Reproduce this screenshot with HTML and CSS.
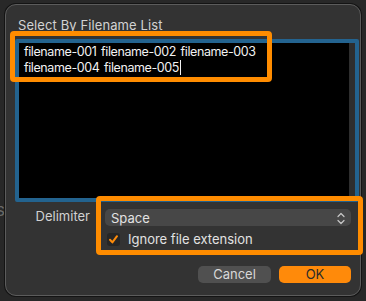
FILE: index.html
```html
<!DOCTYPE html>
<html lang="en">
<head>
  <meta charset="UTF-8" />
  <meta name="viewport" content="width=device-width, initial-scale=1" />
  <title>Select By Filename List</title>
  <link rel="stylesheet" href="styles.css">
</head>
<body>
  <div class="screen">
    <span class="behind">s</span>

    <div class="dialog">
      <div class="title">Select By Filename List</div>

      <div class="scroll-view">
        <div class="text-area">filename-001 filename-002 filename-003<br>filename-004 filename-005<span class="caret"></span></div>
        <div class="scroll-track"></div>
      </div>

      <div class="form-row">
        <div class="form-label">Delimiter</div>
        <div class="form-controls">
          <div class="popup">
            <span>Space</span>
            <svg class="chevrons" width="8" height="13" viewBox="0 0 8 13">
              <path d="M1 4.5 L4 1.5 L7 4.5 M1 8.5 L4 11.5 L7 8.5" fill="none" stroke="#c8c8c8" stroke-width="1.2" stroke-linecap="round" stroke-linejoin="round"/>
            </svg>
          </div>
          <label class="check">
            <span class="check-box">
              <svg width="11" height="11" viewBox="0 0 11 11">
                <path d="M2 5.8 L4.4 8.4 L9 2.2" fill="none" stroke="#ff8c0a" stroke-width="2" stroke-linecap="round" stroke-linejoin="round"/>
              </svg>
            </span>
            Ignore file extension
          </label>
        </div>
      </div>

      <div class="buttons">
        <button class="btn">Cancel</button>
        <button class="btn btn-ok">OK</button>
      </div>
    </div>

    <!-- highlight boxes drawn over the dialog -->
    <div class="mark mark-text"></div>
    <div class="mark mark-options"></div>
  </div>
</body>
</html>
```

FILE: styles.css
```css
body {
  margin: 0;
  background: #282828;
  font-family: Inter, "Noto Sans", sans-serif;
  font-size: 13px;
  color: #dcdcdc;
}

.screen {
  position: relative;
  width: 366px;
  height: 301px;
  overflow: hidden;
  padding: 4px 0 0 5px;
  box-sizing: border-box;
}

.behind {
  position: absolute;
  left: -4px;
  top: 200px;
  font-size: 17px;
  color: #6a6a6a;
}

.dialog {
  position: relative;
  width: 356px;
  height: 292px;
  box-sizing: border-box;
  background: #333333;
  border: 1px solid #5c5c5c;
  border-radius: 11px;
  box-shadow: 0 0 0 1px #141414;
  padding: 11px 0 0 0;
}

.title {
  padding-left: 12px;
  line-height: 18px;
  color: #d2d2d2;
  letter-spacing: 0.1px;
}

.scroll-view {
  display: flex;
  margin: 5px 0 0 9px;
  width: 344px;
  height: 163px;
  box-sizing: border-box;
  border: 4px solid #23638f;
  border-radius: 2px;
}

.text-area {
  flex: 1;
  background: #000;
  color: #f2f2f2;
  padding: 1px 0 0 5px;
  font-size: 12.5px;
  line-height: 16px;
  letter-spacing: -0.4px;
  word-spacing: 1.5px;
}

.caret {
  display: inline-block;
  width: 1px;
  height: 15px;
  margin-left: 1px;
  background: #f2f2f2;
  vertical-align: -3px;
}

.scroll-track {
  width: 6px;
  background: #2e2e2e;
}

.form-row {
  display: flex;
  margin-top: 6px;
}

.form-label {
  width: 84px;
  text-align: right;
  color: #d2d2d2;
}

.form-controls {
  margin-left: 15px;
  width: 246px;
}

.popup {
  display: flex;
  align-items: center;
  justify-content: space-between;
  height: 17px;
  margin-top: 1px;
  padding: 0 6px 0 6px;
  background: #474747;
  border-radius: 5px;
  color: #e2e2e2;
}

.chevrons {
  margin-top: 1px;
}

.check {
  display: flex;
  align-items: center;
  gap: 8px;
  margin-top: 5px;
  margin-left: 2px;
  color: #e2e2e2;
}

.check-box {
  display: flex;
  align-items: center;
  justify-content: center;
  width: 13px;
  height: 13px;
  background: #262626;
  border-radius: 3px;
}

.buttons {
  display: flex;
  justify-content: flex-end;
  gap: 8px;
  margin-top: 19px;
  padding-right: 9px;
}

.btn {
  width: 73px;
  height: 17px;
  padding: 0;
  border: none;
  border-radius: 5px;
  background: #505050;
  color: #d8d8d8;
  font-family: inherit;
  font-size: 13px;
  line-height: 17px;
}

.btn-ok {
  width: 72px;
  background: #ff8a0a;
  color: #2a2a2a;
}

.mark {
  position: absolute;
  border: 5px solid #ff8c00;
  border-radius: 4px;
  box-sizing: border-box;
}

.mark-text {
  left: 10px;
  top: 31px;
  width: 262px;
  height: 51px;
}

.mark-options {
  left: 96px;
  top: 196px;
  width: 267px;
  height: 59px;
}
```
